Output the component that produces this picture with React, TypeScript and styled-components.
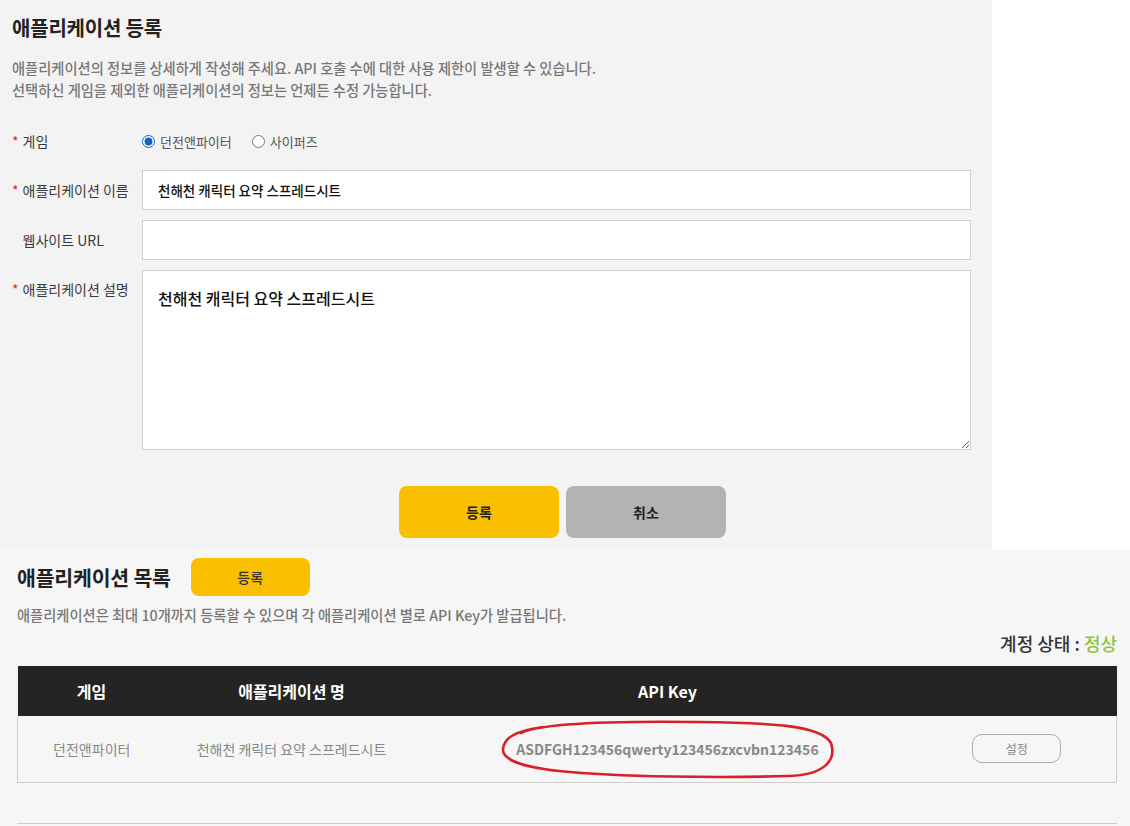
import React from "react";
import styled, { createGlobalStyle } from "styled-components";

const Global = createGlobalStyle`
  html, body { margin: 0; padding: 0; background: #ffffff; }
  body { font-family: "Noto Sans CJK KR", "Noto Sans", sans-serif; color: #333; }
  * { box-sizing: border-box; }
`;

const Page = styled.div`
  width: 1130px;
  height: 826px;
  overflow: hidden;
  display: flex;
  flex-direction: column;
`;

const TopRow = styled.div`
  display: flex;
  height: 550px;
  background: #ffffff;
`;

const FormPanel = styled.section`
  width: 992px;
  background: #f3f3f3;
  padding: 14px 21px 12px 12px;
  display: flex;
  flex-direction: column;
`;

const Title = styled.h1`
  margin: 0;
  font-size: 20px;
  line-height: 28px;
  font-weight: 700;
  color: #222;
  letter-spacing: -0.2px;
`;

const Desc = styled.p`
  margin: 15px 0 0;
  font-size: 14.25px;
  line-height: 22px;
  font-weight: 500;
  color: #777;
`;

const Form = styled.div`
  margin-top: 25px;
  display: flex;
  flex-direction: column;
  gap: 10px;
`;

const Row = styled.div<{ $top?: boolean; $h?: number; $mb?: number }>`
  display: grid;
  grid-template-columns: 130px 829px;
  align-items: ${(p) => (p.$top ? "start" : "center")};
  ${(p) => (p.$h ? `height: ${p.$h}px;` : "")}
  ${(p) => (p.$mb ? `margin-bottom: ${p.$mb}px;` : "")}
`;

const Label = styled.label<{ $top?: boolean }>`
  font-size: 14px;
  line-height: 20px;
  color: #3a3a3a;
  padding-top: ${(p) => (p.$top ? "9px" : "0")};
  white-space: nowrap;
`;

const Star = styled.span<{ $hidden?: boolean }>`
  color: #e0262b;
  margin-right: 4px;
  visibility: ${(p) => (p.$hidden ? "hidden" : "visible")};
`;

const RadioGroup = styled.div`
  display: flex;
  align-items: center;
  gap: 20px;
`;

const RadioLabel = styled.label`
  display: flex;
  align-items: center;
  gap: 5px;
  font-size: 13px;
  color: #555;
`;

const Radio = styled.input`
  margin: 0;
  width: 13px;
  height: 13px;
  accent-color: #0a64d2;
`;

const TextInput = styled.input`
  height: 40px;
  width: 100%;
  border: 1px solid #cfcfcf;
  background: #fff;
  padding: 0 15px;
  font-family: inherit;
  font-size: 13.5px;
  font-weight: 500;
  color: #111;
  outline: none;
`;

const TextArea = styled.textarea`
  height: 180px;
  width: 100%;
  border: 1px solid #cfcfcf;
  background: #fff;
  padding: 14px 15px;
  font-family: inherit;
  font-size: 16px;
  line-height: 26px;
  font-weight: 500;
  color: #111;
  outline: none;
  resize: both;
  display: block;
`;

const ButtonRow = styled.div`
  margin-top: 36px;
  padding-left: 387px;
  display: flex;
  gap: 7px;
`;

const BigButton = styled.button<{ $variant: "primary" | "gray" }>`
  width: 160px;
  height: 52px;
  border: none;
  border-radius: 8px;
  background: ${(p) => (p.$variant === "primary" ? "#f9c000" : "#b3b3b3")};
  font-family: inherit;
  font-size: 14px;
  font-weight: 700;
  color: #222;
`;

const ListSection = styled.section`
  flex: 1;
  background: #f6f6f6;
  padding: 8px 13px 0 17px;
  display: flex;
  flex-direction: column;
`;

const ListHeader = styled.div`
  display: flex;
  align-items: center;
  gap: 20px;
`;

const ListTitle = styled.h2`
  margin: 0;
  font-size: 20.5px;
  font-weight: 700;
  color: #222;
  letter-spacing: -0.2px;
`;

const SmallButton = styled.button`
  width: 119px;
  height: 38px;
  border: none;
  border-radius: 8px;
  background: #f9c000;
  font-family: inherit;
  font-size: 14px;
  font-weight: 500;
  color: #333;
`;

const ListDesc = styled.p`
  margin: 8px 0 0;
  font-size: 14.25px;
  line-height: 22px;
  font-weight: 500;
  color: #777;
`;

const Status = styled.div`
  margin-top: 5px;
  text-align: right;
  font-size: 18px;
  line-height: 24px;
  font-weight: 500;
  color: #333;
`;

const Ok = styled.span`
  color: #8cc43c;
`;

const Table = styled.table`
  margin-top: 11px;
  width: 1100px;
  border-collapse: collapse;
  table-layout: fixed;
`;

const Th = styled.th<{ $w?: number }>`
  ${(p) => (p.$w ? `width: ${p.$w}px;` : "")}
  height: 50px;
  background: #242424;
  color: #fff;
  font-size: 16px;
  font-weight: 700;
  text-align: center;
  padding: 0;
`;

const Tr = styled.tr`
  height: 66px;
  border: 1px solid #cfcfcf;
  border-top: none;
`;

const Td = styled.td<{ $strong?: boolean }>`
  position: relative;
  text-align: center;
  padding: 0;
  font-size: 14px;
  font-weight: ${(p) => (p.$strong ? 700 : 400)};
  color: #888;
`;

const SettingButton = styled.button`
  width: 89px;
  height: 29px;
  border: 1px solid #aaa;
  border-radius: 10px;
  background: #f6f6f6;
  font-family: inherit;
  font-size: 12px;
  color: #888;
`;

const Circle = styled.svg`
  position: absolute;
  left: 81px;
  top: 3px;
  width: 338px;
  height: 60px;
  pointer-events: none;
`;

const BottomLine = styled.hr`
  margin: 40px 0 0;
  width: 1100px;
  border: none;
  border-top: 1px solid #cfcfcf;
`;

export default function App() {
  return (
    <Page>
      <Global />
      <TopRow>
        <FormPanel>
          <Title>애플리케이션 등록</Title>
          <Desc>
            애플리케이션의 정보를 상세하게 작성해 주세요. API 호출 수에 대한 사용 제한이 발생할 수 있습니다.
            <br />
            선택하신 게임을 제외한 애플리케이션의 정보는 언제든 수정 가능합니다.
          </Desc>
          <Form>
            <Row $h={30} $mb={4}>
              <Label>
                <Star>*</Star>게임
              </Label>
              <RadioGroup>
                <RadioLabel>
                  <Radio type="radio" name="game" defaultChecked />
                  던전앤파이터
                </RadioLabel>
                <RadioLabel>
                  <Radio type="radio" name="game" />
                  사이퍼즈
                </RadioLabel>
              </RadioGroup>
            </Row>
            <Row>
              <Label>
                <Star>*</Star>애플리케이션 이름
              </Label>
              <TextInput defaultValue="천해천 캐릭터 요약 스프레드시트" />
            </Row>
            <Row>
              <Label>
                <Star $hidden>*</Star>웹사이트 URL
              </Label>
              <TextInput defaultValue="" />
            </Row>
            <Row $top>
              <Label $top>
                <Star>*</Star>애플리케이션 설명
              </Label>
              <TextArea defaultValue="천해천 캐릭터 요약 스프레드시트" />
            </Row>
          </Form>
          <ButtonRow>
            <BigButton $variant="primary">등록</BigButton>
            <BigButton $variant="gray">취소</BigButton>
          </ButtonRow>
        </FormPanel>
      </TopRow>
      <ListSection>
        <ListHeader>
          <ListTitle>애플리케이션 목록</ListTitle>
          <SmallButton>등록</SmallButton>
        </ListHeader>
        <ListDesc>
          애플리케이션은 최대 10개까지 등록할 수 있으며 각 애플리케이션 별로 API Key가 발급됩니다.
        </ListDesc>
        <Status>
          계정 상태 : <Ok>정상</Ok>
        </Status>
        <Table>
          <thead>
            <tr>
              <Th $w={148}>게임</Th>
              <Th $w={252}>애플리케이션 명</Th>
              <Th $w={500}>API Key</Th>
              <Th></Th>
            </tr>
          </thead>
          <tbody>
            <Tr>
              <Td>던전앤파이터</Td>
              <Td>천해천 캐릭터 요약 스프레드시트</Td>
              <Td $strong>
                ASDFGH123456qwerty123456zxcvbn123456
                <Circle viewBox="0 0 338 60">
                  <path
                    d="M 22 14 C 42 4, 120 2, 200 3 C 272 4, 322 6, 332 24 C 338 42, 324 56, 290 57 C 220 59, 120 58, 60 52 C 22 48, 3 40, 4 30 C 5 20, 14 12, 44 8"
                    fill="none"
                    stroke="#d81f2a"
                    strokeWidth="2.6"
                    strokeLinecap="round"
                  />
                </Circle>
              </Td>
              <Td>
                <SettingButton>설정</SettingButton>
              </Td>
            </Tr>
          </tbody>
        </Table>
        <BottomLine />
      </ListSection>
    </Page>
  );
}
